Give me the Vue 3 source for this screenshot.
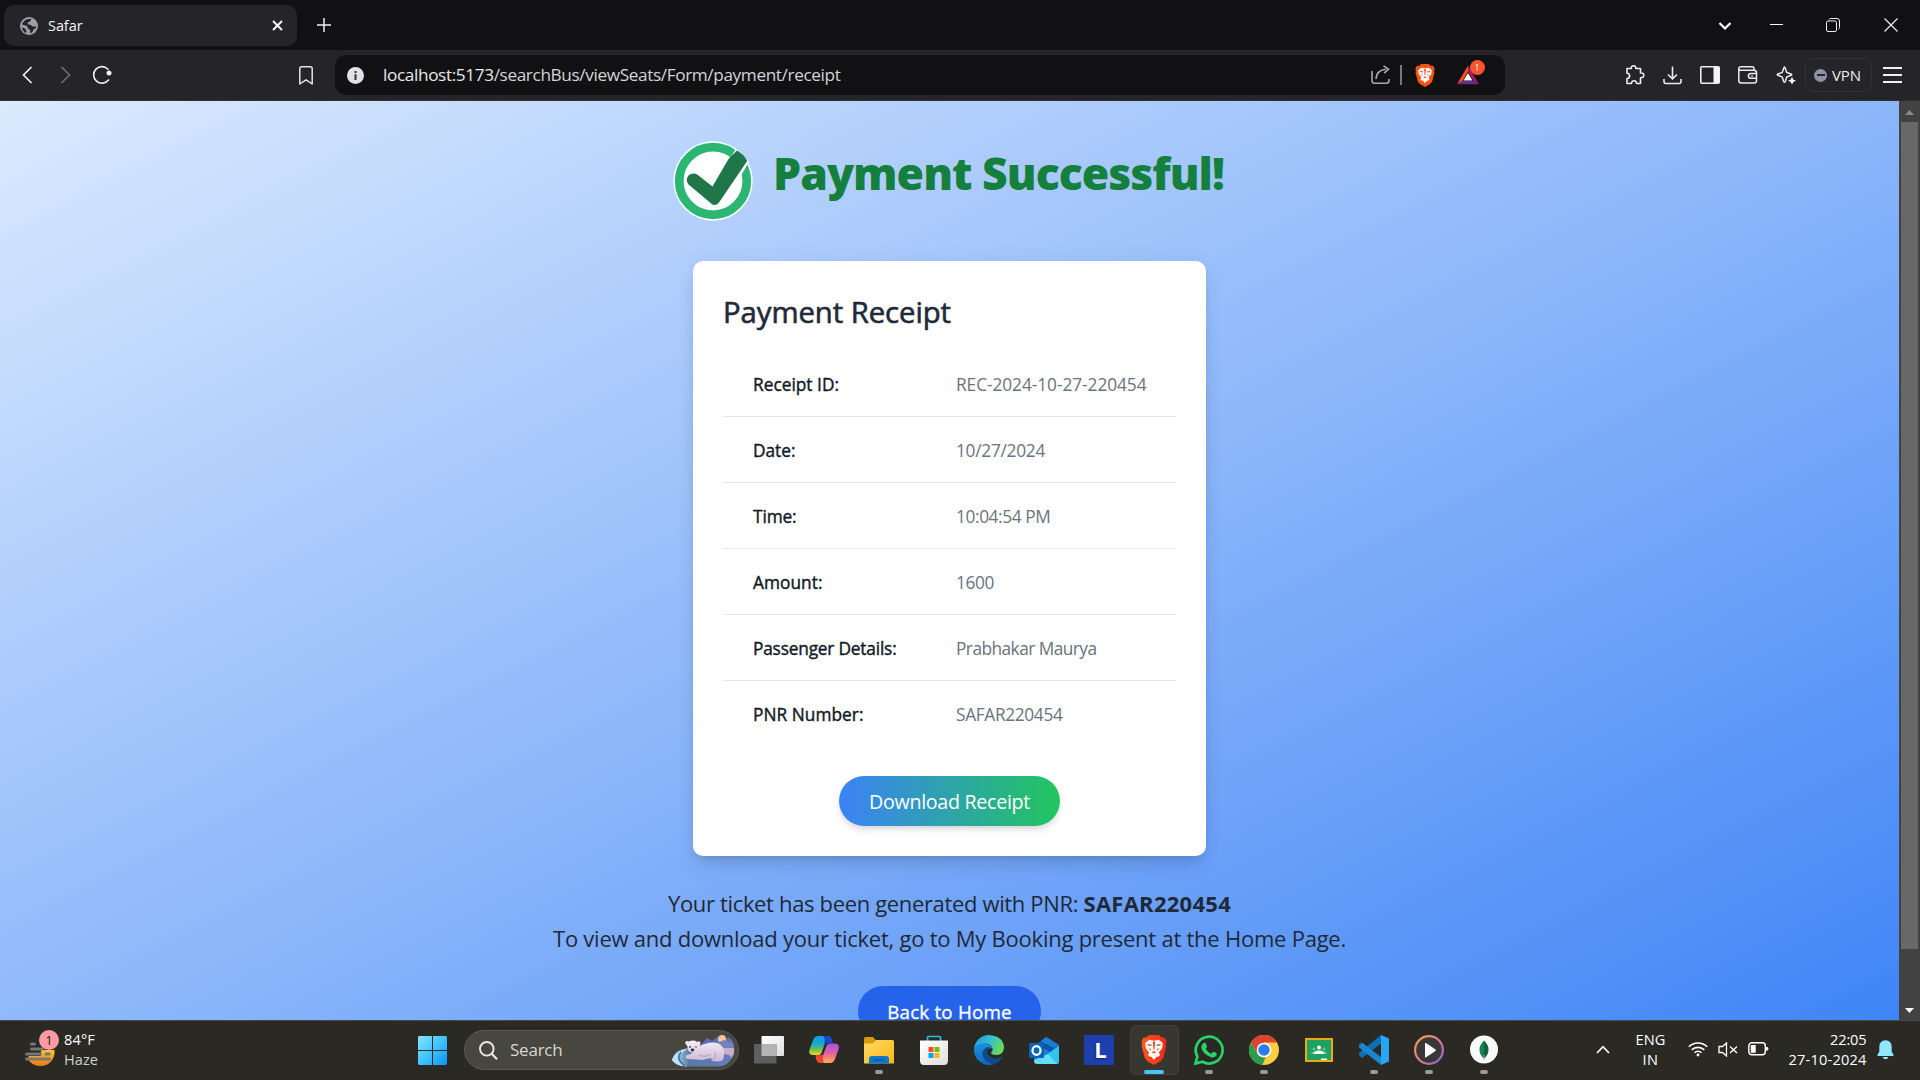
<script setup>
// Fits a label to a fixed advance width by spreading the difference over its letters.
const vFit = {
  mounted(el, { value }) {
    const apply = () => {
      el.style.letterSpacing = '0px'
      const natural = el.getBoundingClientRect().width
      el.style.letterSpacing = (value - natural) / el.textContent.length + 'px'
    }
    apply()
    if (document.fonts && document.fonts.ready) document.fonts.ready.then(apply)
  }
}

const rows = [
  { label: 'Receipt ID:', lw: 86, value: 'REC-2024-10-27-220454', vw: 190.5 },
  { label: 'Date:', lw: 42.5, value: '10/27/2024', vw: 89 },
  { label: 'Time:', lw: 43.5, value: '10:04:54 PM', vw: 94.5 },
  { label: 'Amount:', lw: 69.5, value: '1600', vw: 38 },
  { label: 'Passenger Details:', lw: 143.5, value: 'Prabhakar Maurya', vw: 140.5 },
  { label: 'PNR Number:', lw: 110.5, value: 'SAFAR220454', vw: 106.5 }
]
</script>

<template>
  <div class="screen">
    <svg width="0" height="0" class="defs">
      <defs>
        <linearGradient id="braveG" x1="0" y1="0" x2="1" y2="0"><stop offset="0" stop-color="#ff5a1c" /><stop offset="1" stop-color="#f8231a" /></linearGradient>
        <linearGradient id="winG" x1="0" y1="0" x2="1" y2="1"><stop offset="0" stop-color="#8be3ff" /><stop offset=".45" stop-color="#45c8fb" /><stop offset="1" stop-color="#0a93fb" /></linearGradient>
        <symbol id="lion" viewBox="0 0 26 30">
          <path d="M8 0h10l2.600 2.600 2.800-.2L25.600 6l-.8 3 .6 2-3.200 12-3 3.400L13 30l-6.200-3.600-3-3.400L.6 11l.6-2-.8-3 2.200-3.600 2.800.2z" />
          <path d="M8.200 4.800 13 5.700l4.800-.9 4 3.200-.6 5.200-3.400 4.200 1.200 2.600-1.500 1.600-2 .2L13 25l-2.500-3.200-2-.2L7 20l1.200-2.600-3.400-4.200L4.200 8z" fill="#fff" />
          <path d="M6.500 9l4.300.7-.8 1.400-3.400-.6zM19.500 9l-4.300.7.8 1.400 3.400-.6zM11.900 6.500h2.200L13.500 14.500h-1zM10.500 17l2.500-.7 2.500.7-2.500 1.600zM8 13l2 1.300-.8 1.700zM18 13l-2 1.300.8 1.700z" fill="#f4401c" />
        </symbol>
      </defs>
    </svg>

    <header class="tabs">
      <div class="tab">
        <svg class="globe" width="18" height="18" viewBox="0 0 18 18"><circle cx="9" cy="9" r="9" fill="#9aa0a6" /><path d="M8 1.900 11.500 2 10 4.500 7.800 5.200v2l2.700.5 2.200 1.800h3.500L16 11l-2.500 1.500-1.200 2.800-2.300 1 .2-3L7.600 11l-.5-2L2 7.600 2.800 5.500 5.300 3z" fill="#252429" /><path d="M2 10.200 5 11.500l1.500 2.200-.3 2.400C3.800 15 2.100 12.800 2 10.200z" fill="#252429" /></svg>
        <span class="tab-title"><span v-fit="34.5" class="t">Safar</span></span>
        <svg class="tab-x" width="11" height="11" viewBox="0 0 11 11"><path d="M1 1l9 9M10 1l-9 9" stroke="#fff" stroke-width="1.900" /></svg>
      </div>
      <svg class="plus" width="14" height="14" viewBox="0 0 14 14"><path d="M7 0v14M0 7h14" stroke="#eee" stroke-width="1.500" /></svg>
      <div class="win">
        <svg width="14" height="10" viewBox="0 0 14 10"><path d="M1.500 2l5.500 5.500L12.500 2" fill="none" stroke="#fff" stroke-width="2.200" /></svg>
        <svg width="14" height="14" viewBox="0 0 14 14"><path d="M0 6.500h13" stroke="#fff" /></svg>
        <svg width="14" height="14" viewBox="0 0 14 14" fill="none" stroke="#eee"><rect x=".5" y="3" width="10" height="10.500" rx="1.500" /><path d="M3 1.500Q3.300.5 4.500.5H11a2.500 2.500 0 0 1 2.500 2.500v6.500q0 1.200-1 1.500" /></svg>
        <svg width="14" height="14" viewBox="0 0 14 14"><path d="M.5.5l13 13M13.500.5l-13 13" stroke="#eee" stroke-width="1.200" /></svg>
      </div>
    </header>

    <nav class="toolbar">
      <svg class="back" width="11" height="18" viewBox="0 0 11 18"><path d="M9.500 1 1.500 9l8 8" fill="none" stroke="#f1f1f3" stroke-width="1.700" /></svg>
      <svg class="fwd" width="11" height="18" viewBox="0 0 11 18"><path d="M1.500 1l8 8-8 8" fill="none" stroke="#6d6d73" stroke-width="1.700" /></svg>
      <svg class="reload" width="20" height="20" viewBox="0 0 20 20"><path d="M16.500 15A8.300 8.300 0 1 1 16 4.200" fill="none" stroke="#f1f1f3" stroke-width="1.600" stroke-linecap="round" /><circle cx="17" cy="8" r="2.500" fill="#f1f1f3" /></svg>
      <svg class="mark" width="14" height="19" viewBox="0 0 14 19"><path d="M.8 2.800Q.8.800 2.800.8h8.400q2 0 2 2V18L7 13.800.8 18z" fill="none" stroke="#e4e4e8" stroke-width="1.500" stroke-linejoin="round" /></svg>
      <div class="url">
        <svg width="17" height="17" viewBox="0 0 17 17"><circle cx="8.500" cy="8.500" r="8.500" fill="#e3e1e8" /><path d="M7.500 7.200h2v5.800h-2zM7.500 4h2v2h-2z" fill="#333" /></svg>
        <span class="address"><span v-fit="457.500" class="t">localhost:5173<span class="dim">/searchBus/viewSeats/Form/payment/receipt</span></span></span>
        <svg class="share" width="20" height="20" viewBox="0 0 20 20" fill="none" stroke="#a8a8ad" stroke-width="1.600"><path d="M1 6v9.500Q1 18.200 3.700 18.200h11.600q2.700 0 2.700-2.700V14M5 14Q5.500 5 15 4.200M12.500.8 17.500 4.200 13.200 8.200" /></svg>
        <i class="sep"></i>
        <svg class="lion-s" width="20" height="23" fill="#ff5410"><use href="#lion" /></svg>
        <div class="bat">
          <svg width="22" height="20" viewBox="0 0 24 21"><path d="M12 0 0 20.500 6.200 17 12 7z" fill="#ff4724" /><path d="M12 0v7l5.800 10 6.200 3.500z" fill="#9e1f63" /><path d="M0 20.500h24L17.800 17H6.200z" fill="#662d91" /><path d="M12 8.200 16.800 16.400H7.200z" fill="#fff" /></svg>
          <b>1</b>
        </div>
      </div>
      <div class="tools">
        <svg width="20" height="20" viewBox="0 0 20 20"><path d="M2 3.500h4.300Q6 .8 8.500.8T10.800 3.500H15.500V8Q18.800 7.700 18.800 10.300T15.500 12.800V18.500H11.600Q11.500 15.700 9 15.700T6.500 18.500H2V13.500Q4.600 13.300 4.600 10.900T2 8.300z" fill="none" stroke="#ececf0" stroke-width="1.600" stroke-linejoin="round" /></svg>
        <svg width="19" height="19" viewBox="0 0 19 19"><path d="M9.500.5v12M5 8.500l4.500 4.300L14 8.500M1 13v2.500q0 2 2 2h13q2 0 2-2V13" fill="none" stroke="#ececf0" stroke-width="1.600" /></svg>
        <svg width="20" height="18" viewBox="0 0 20 18"><rect x=".8" y=".8" width="18.400" height="16.400" rx="1" fill="none" stroke="#ececf0" stroke-width="1.600" /><path d="M13.500 1h6v16h-6z" fill="#f4f4f6" /></svg>
        <svg width="20" height="18" viewBox="0 0 20 18" fill="none" stroke="#ececf0" stroke-width="1.500"><path d="M16 4V2.500Q16 .8 14.300.8H3Q.8.8.8 2.700V14.500Q.8 17 3.200 17H16q2.500 0 2.500-2.300V6.500Q18.500 4.200 16 4.200H3Q1 4.200.9 3" /><path d="M19 7.500h-6q-2.600 0-2.600 2.400t2.600 2.400h6M13.300 9.900h1.500" /></svg>
        <svg width="20" height="19" viewBox="0 0 20 19"><path d="M8.500 1Q9 1 9.300 2.300L10.700 6.500 15 8q1.500.600 0 1.300L10.700 11 9.300 15.500q-.8 1.600-1.600 0L6.200 11 2 9.300Q.500 8.600 2 8L6.200 6.500 7.700 2.300Q8 1 8.500 1z" fill="none" stroke="#ececf0" stroke-width="1.500" /><path d="M16 10.800l1.200 2.800 2.800 1.200-2.800 1.200L16 18.800 14.800 16 12 14.800l2.800-1.200z" fill="#fff" /></svg>
      </div>
      <div class="vpn"><i></i><span v-fit="29" class="t">VPN</span></div>
      <div class="burger"><i></i><i></i><i></i></div>
    </nav>

    <div class="viewport">
      <main class="page">
        <div class="title">
          <svg width="80" height="80" viewBox="0 0 80 80"><circle cx="40" cy="40" r="39.700" fill="#fff" /><circle cx="40" cy="40" r="33.800" fill="none" stroke="#2cb673" stroke-width="8.800" /><path d="M63 8 76 21 67 36 54 22z" fill="#fff" /><path d="M55.500 18 64 9.600Q70.500 13 74.200 20L46 61.500Q41.500 66.500 37 61.500L15.500 43.500Q12 39 15.500 34.500 20 31 24.500 33.800L39.500 45.500z" fill="#1f7648" /></svg>
          <h1><span v-fit="451" class="t">Payment Successful!</span></h1>
        </div>
        <section class="card">
          <h2><span v-fit="228" class="t">Payment Receipt</span></h2>
          <dl>
            <div v-for="r in rows" :key="r.label" class="row">
              <dt><span v-fit="r.lw" class="t">{{ r.label }}</span></dt>
              <dd><span v-fit="r.vw" class="t">{{ r.value }}</span></dd>
            </div>
          </dl>
          <button class="download"><span v-fit="161" class="t">Download Receipt</span></button>
        </section>
        <p><span v-fit="415.500" class="t pre">Your ticket has been generated with PNR: </span><b><span v-fit="147.500" class="t">SAFAR220454</span></b></p>
        <p><span v-fit="793" class="t">To view and download your ticket, go to My Booking present at the Home Page.</span></p>
        <button class="home"><span v-fit="124.500" class="t">Back to Home</span></button>
      </main>
      <aside class="scroll">
        <svg width="9" height="5" viewBox="0 0 9 5"><path d="M0 5 4.500 0 9 5z" fill="#8a8a8a" /></svg>
        <i></i>
        <svg width="9" height="5" viewBox="0 0 9 5"><path d="M0 0 4.500 5 9 0z" fill="#fff" /></svg>
      </aside>
    </div>

    <footer class="taskbar">
      <div class="weather">
        <svg width="36" height="38" viewBox="0 0 36 38">
          <defs><linearGradient id="sun" x1="0" y1="0" x2="0" y2="1"><stop offset="0" stop-color="#f8c130" /><stop offset="1" stop-color="#f07a18" /></linearGradient></defs>
          <path d="M16 20h13.500A14 14 0 0 1 15 36Q7 35.500 3.500 30V26h12z" fill="url(#sun)" />
          <path d="M6.500 14h3M6.500 19h11M1.500 24h14M21 24h3M1.500 29h23" stroke="#77777a" stroke-width="3" stroke-linecap="round" />
          <circle cx="24" cy="10" r="10" fill="#ff99a4" />
          <text x="24" y="15" text-anchor="middle" font-size="13" font-family="Open Sans, sans-serif" fill="#222">1</text>
        </svg>
        <div class="wtext"><span><span v-fit="31" class="t">84°F</span></span><span class="soft"><span v-fit="34" class="t">Haze</span></span></div>
      </div>

      <svg class="start" width="29" height="29" viewBox="0 0 29 29"><path d="M1 0h13v14H0V1zM15 0h13l1 1v13H15zM0 15h14v14H1l-1-1zM15 15h14v13l-1 1H15z" fill="url(#winG)" /></svg>

      <div class="search">
        <svg width="19" height="19" viewBox="0 0 19 19"><circle cx="7.800" cy="7.800" r="6.800" fill="none" stroke="#e8e8e6" stroke-width="1.900" /><path d="M12.500 12.500l5.500 5.700" stroke="#e8e8e6" stroke-width="2.200" /></svg>
        <span class="stext"><span v-fit="52.500" class="t">Search</span></span>
        <svg class="bear" width="64" height="32" viewBox="0 0 64 32">
          <defs><linearGradient id="ice" x1="0" y1="0" x2="1" y2="0"><stop offset="0" stop-color="#b5e4fa" /><stop offset=".3" stop-color="#587ba6" /><stop offset="1" stop-color="#657bbb" /></linearGradient><linearGradient id="fur" x1="0" y1="0" x2="0" y2="1"><stop offset="0" stop-color="#f5edf6" /><stop offset="1" stop-color="#cdb7d5" /></linearGradient></defs>
          <path d="M28 12 36 3l5 3 5-4 7 4 4-4 4 3q3 6 2 14H30z" fill="#5e70b3" />
          <circle cx="51" cy="4" r="4" fill="#f4c29c" /><path d="M45 8.500 53 5l9 3 1 6H44z" fill="#7282bf" />
          <path d="M50 13h13q1 7-4 12l-10 1z" fill="#c9adc6" />
          <path d="M1 25Q4 14 18 13L58 20Q62 22 58 27 54 31.500 46 31.500H16Q5 31 1 25z" fill="url(#ice)" />
          <path d="M1 25Q5 15 17 13.500 7 20 8 24t8 7.500Q5 31 1 25z" fill="#b9e3fa" /><path d="M10 17Q4 24 14 31" fill="none" stroke="#3d6595" stroke-width="1.500" />
          <path d="M14 8q1-3 4-1.500 5-2 8 .500 3-2 3.500 1 0 2-1 3 10-5 18-3Q54 11 53 20q0 6-5 6.500l-7-.500-1-3-9 2-14-1Q13 23 16 20q4-1 6-2.500-6 0-5.500-6z" fill="url(#fur)" />
          <path d="M28 20q6 3 12-1M44 17q2 6-3 8" fill="none" stroke="#b195ba" stroke-width=".8" />
          <circle cx="19" cy="12" r=".9" fill="#444" /><circle cx="25" cy="12" r=".8" fill="#444" /><ellipse cx="21.500" cy="15" rx="1.800" ry="1.400" fill="#3c343d" />
        </svg>
      </div>

      <div class="apps">
        <div class="app"><svg width="30" height="30" viewBox="0 0 30 30"><defs><linearGradient id="tv" x1="0" y1="0" x2="1" y2="1"><stop offset="0" stop-color="#fff" /><stop offset="1" stop-color="#dedede" /></linearGradient></defs><rect x="7.500" y="1" width="22.500" height="20" rx="1" fill="url(#tv)" /><rect x="0" y="9" width="22.500" height="19.500" rx="1" fill="#5f5f5f" /><path d="M7.500 9h15v12h-15z" fill="#b4b4b4" /></svg></div>

        <div class="app"><svg width="30" height="30" viewBox="0 0 30 30">
          <defs>
            <linearGradient id="cpA" x1="0" y1="0" x2="0" y2="1"><stop offset="0" stop-color="#1c95ee" /><stop offset=".4" stop-color="#15a8c8" /><stop offset=".7" stop-color="#69bd57" /><stop offset="1" stop-color="#f4d621" /></linearGradient>
            <linearGradient id="cpB" x1="0" y1="0" x2="0" y2="1"><stop offset="0" stop-color="#a355e8" /><stop offset=".5" stop-color="#e5609c" /><stop offset="1" stop-color="#ffae4b" /></linearGradient>
          </defs>
          <path d="M9 1h10q2.500 0 3.300 2.800L23.500 8H18q-2 0-2.700 2L12.500 18q-.8 2-3 2H4q-5 0-3.500-5.500L4 5Q5.500 1 9 1z" fill="url(#cpA)" />
          <path d="M14 1h5q2.500 0 3.300 2.800L23.500 8H18q-2.500 0-3.500 3Q17 4 14 1z" fill="#1947cf" />
          <path d="M21 28H11q-2.500 0-3.300-2.800L6.500 20.500H12q2 0 2.700-2L17.500 11q.8-2.500 3-2.500H26q5 0 3.500 6L26 24q-1.500 4-5 4z" fill="url(#cpB)" />
          <path d="M6.500 20.500H12q2 0 2.700-2Q13 25 15 28h-4q-2.500 0-3.300-2.800z" fill="#e9472f" />
        </svg></div>

        <div class="app"><svg width="30" height="30" viewBox="0 0 30 30"><defs><linearGradient id="fo" x1="0" y1="0" x2="1" y2="1"><stop offset="0" stop-color="#ffd968" /><stop offset="1" stop-color="#f9b916" /></linearGradient></defs><path d="M0 3.500Q0 2 1.500 2H9l3 3.500L9 9H0z" fill="#d89a0c" /><path d="M0 8.500h8.500L12 5h16.500Q30 5 30 6.500v22H0z" fill="url(#fo)" /><path d="M5 28.500V24q0-3 3-3h14q3 0 3 3v4.500z" fill="#0f77cc" /><path d="M10 25h10" stroke="#0a4c91" stroke-width="1.200" /></svg><i class="dot"></i></div>

        <div class="app"><svg width="30" height="30" viewBox="0 0 30 30"><path d="M8.500 6V2.500q0-1 1-1h11q1 0 1 1V6" fill="none" stroke="#2db9ee" stroke-width="1.700" /><path d="M1 5.500h28v20Q29 30 25 30H5q-4 0-4-4.500z" fill="url(#tv)" /><path d="M9.500 12h5v5h-5z" fill="#f25022" /><path d="M15.500 12h5v5h-5z" fill="#7fba00" /><path d="M9.500 18h5v5h-5z" fill="#00a4ef" /><path d="M15.500 18h5v5h-5z" fill="#ffb900" /></svg></div>

        <div class="app"><svg width="30" height="30" viewBox="0 0 30 30">
          <defs><linearGradient id="edA" x1="0" y1=".3" x2="1" y2=".6"><stop offset="0" stop-color="#1d9be4" /><stop offset=".5" stop-color="#35c1cf" /><stop offset="1" stop-color="#6fdd4a" /></linearGradient><linearGradient id="edB" x1="0" y1="0" x2="0" y2="1"><stop offset="0" stop-color="#1a92df" /><stop offset="1" stop-color="#0d67bd" /></linearGradient></defs>
          <path d="M0 14A15 15 0 0 1 15 0Q29.500 1 30 12.500q-.500 7.500-7.500 7.500-5 0-5.500-2.200 2-1.800 1.500-4.300Q17.500 8.500 11 8.500 3 9 0 14z" fill="url(#edA)" />
          <path d="M0 14Q3 8.500 10.500 8.500q7 .5 8 5-5-2-8 2.500-2 7 4 11 3 2.500 7 1.500Q18 30 15 30A15 15 0 0 1 0 14z" fill="url(#edB)" />
          <path d="M12 12.500Q7 16 9 21.500 12 29 20.500 29 26 27 28.300 22.500q0-1-1-.5-6.300 3-11.300-.5-4-3-2.500-6.500.8-1.500 4-1.500-2.500-2.500-5.500-1z" fill="#114a8b" />
        </svg></div>

        <div class="app"><svg width="30" height="30" viewBox="0 0 30 30"><path d="M5 12 17 2 30 10v16.500Q30 29 27.500 29H8q-3 0-3-3z" fill="#1683d8" /><path d="M7 9 17 2 30 10 21 17z" fill="#0a54a8" /><path d="M12 6.500 25 13l5-3-13-8z" fill="#1a7ed0" /><path d="M30 11v15.500Q30 29 27.500 29H10L20 18z" fill="#32c4f1" /><path d="M5 25l14-6 9 9.700q-1 .3-2 .3H8q-3 0-3-4z" fill="#67dcf8" /><rect x="0" y="8" width="15" height="15" rx="1.500" fill="#0b63b8" /><ellipse cx="7.500" cy="15.500" rx="4" ry="4.300" fill="none" stroke="#fff" stroke-width="2.200" /></svg></div>

        <div class="app"><span class="ltile">L</span></div>

        <div class="app active"><svg width="26" height="30" fill="url(#braveG)"><use href="#lion" /></svg><i class="dot on"></i></div>

        <div class="app"><svg width="30" height="30" viewBox="0 0 30 30"><path d="M1.500 28.500 3.400 21.500A13.400 13.400 0 1 1 8.300 26.600z" fill="none" stroke="#25d366" stroke-width="2.700" /><path d="M9.300 8.300q1.200-1.300 2.300-.2l1.500 3.300q0 .9-1.400 2.400 1.800 3.400 5.500 5 1-.9 1.700-1.900.7-.5 3.500 1.200 1.200.9-.3 3-2.500 2.200-5.800.8-6-2-8.700-7.800-1-3.500 1.700-5.800z" fill="#25d366" /></svg><i class="dot"></i></div>

        <div class="app"><svg width="30" height="30" viewBox="0 0 30 30"><circle cx="15" cy="15" r="15" fill="#ffcd40" /><path d="M2 7.500A15 15 0 0 1 28 7.500H15L8.500 18.700z" fill="#df4233" /><path d="M2 7.500 8.500 18.700Q11 22.500 15 22.500h1.500L13.500 30A15 15 0 0 1 2 7.500z" fill="#2b9c4e" /><path d="M21.500 18.700 15 30q-.8 0-1.500-.1L17.500 22z" fill="#ffcd40" /><circle cx="15" cy="15" r="7.300" fill="#fff" /><circle cx="15" cy="15" r="5.800" fill="#2d7cee" /></svg><i class="dot"></i></div>

        <div class="app"><svg width="28" height="30" viewBox="0 0 28 30"><rect x="1" y="4" width="26" height="22" fill="#1da261" stroke="#e8ab14" stroke-width="2" /><circle cx="14" cy="12.500" r="2" fill="#fff" /><path d="M8.500 19q0-3.500 5.500-3.500t5.500 3.500z" fill="#fff" /><circle cx="9" cy="14" r="1.300" fill="#74c79a" /><circle cx="19" cy="14" r="1.300" fill="#74c79a" /><path d="M6 19q0-2 3-2.500v2.500zM22 19q0-2-3-2.500v2.500z" fill="#74c79a" /><path d="M16 23.500h6v1.500h-6z" fill="#fff" /></svg></div>

        <div class="app"><svg width="30" height="30" viewBox="0 0 30 30"><path d="M22 0v8.500L3 23 0 20v-2z" fill="#0f6fb5" /><path d="M0 10l3-2.500L22 22v8L0 12.500z" fill="#1a86cf" /><path d="M22 0l8 3.500v23L22 30z" fill="#27a4f2" /></svg><i class="dot"></i></div>

        <div class="app"><svg width="30" height="30" viewBox="0 0 30 30"><defs><linearGradient id="mp" x1="0" y1="0" x2="1" y2="1"><stop offset="0" stop-color="#ffa03c" /><stop offset=".5" stop-color="#d97a8e" /><stop offset="1" stop-color="#8b62d6" /></linearGradient></defs><circle cx="15" cy="15" r="13.900" fill="#383838" stroke="url(#mp)" stroke-width="2.200" /><path d="M11 8.500v13.500q0 .8 1 .3L21.500 16q.8-.8 0-1.500L12 8q-1-.4-1 .5z" fill="#fff" /></svg><i class="dot"></i></div>

        <div class="app"><svg width="28" height="30" viewBox="0 0 28 30"><circle cx="14" cy="14.500" r="14" fill="#f9f9f9" /><path d="M14 5.500q5 5 4.500 10-.5 5-4.500 8z" fill="#14603f" /><path d="M14 5.500q-5 5-4.500 10 .5 5 4.500 8z" fill="#13835a" /><path d="M14 20v5" stroke="#9bb8a8" /></svg><i class="dot"></i></div>
      </div>

      <div class="tray">
        <svg class="chev" width="14" height="9" viewBox="0 0 14 9"><path d="M1 8l6-6.300L13 8" fill="none" stroke="#fff" stroke-width="1.700" /></svg>
        <div class="lang"><span><span v-fit="30" class="t">ENG</span></span><span><span v-fit="16" class="t">IN</span></span></div>
        <svg class="wifi" width="20" height="16" viewBox="0 0 20 16" fill="none" stroke="#fff" stroke-width="1.600"><path d="M.8 5.800a13 13 0 0 1 18.400 0M3.700 8.900a9 9 0 0 1 12.600 0M6.500 11.800a5 5 0 0 1 7 0" /><circle cx="10" cy="14" r="1.400" fill="#fff" stroke="none" /></svg>
        <svg class="vol" width="20" height="15" viewBox="0 0 20 15" fill="none" stroke="#fff" stroke-width="1.300"><path d="M8.500 1v13L4.500 10.500H1v-6h3.500zM12 4.500l7 6.500M19 4.500 12 11" /></svg>
        <svg class="batt" width="21" height="14" viewBox="0 0 21 14"><rect x=".8" y=".8" width="16.500" height="12" rx="3" fill="none" stroke="#fff" stroke-width="1.400" /><path d="M2.700 3h5v7.700h-5zM18 4.800q2.500 0 2.500 2t-2.500 2z" fill="#fff" /></svg>
        <div class="clock"><span><span v-fit="36.500" class="t">22:05</span></span><span><span v-fit="78" class="t">27-10-2024</span></span></div>
        <svg class="bell" width="17" height="20" viewBox="0 0 17 20"><path d="M8.500.3q6.200.5 6.200 6.500v5l1.900 3q.2 1.200-.8 1.200H1.200Q.2 16 .4 14.800l1.900-3v-5q0-6 6.200-6.500z" fill="#8fe6ff" /><path d="M5.500 17h6q-1 2.300-3 2.300t-3-2.300z" fill="#8fe6ff" /></svg>
      </div>
    </footer>
  </div>
</template>

<style>
html, body { margin: 0; overflow: hidden; background: #111113; }
</style>

<style scoped>
.screen { width: 1920px; height: 1080px; display: flex; flex-direction: column; overflow: hidden; font-family: "Open Sans", "Noto Sans", sans-serif; position: relative; }
.screen * { box-sizing: border-box; }
.defs { position: absolute; }
svg { display: block; flex: none; }
.t { display: inline-block; white-space: nowrap; }
.t.pre { white-space: pre; }

.tabs { height: 50px; flex: none; background: #111113; display: flex; align-items: center; padding-left: 4px; }
.tab { width: 293px; height: 41px; margin-top: 1px; background: #252429; border-radius: 10px; display: flex; align-items: center; padding-left: 16px; }
.tab-title { font-size: 14.500px; color: #f4f4f6; margin-left: 10px; width: 224px; line-height: 20px; }
.plus { margin-left: 20px; }
.win { margin-left: auto; display: flex; align-items: center; margin-right: 22px; }
.win svg:nth-child(1) { margin-top: 2px; }
.win svg:nth-child(2) { margin-left: 38px; margin-right: 42px; margin-top: -1px; }
.win svg:nth-child(4) { margin-left: 44px; }

.toolbar { height: 51px; flex: none; background: #252429; border-bottom: 1px solid #303035; display: flex; align-items: center; }
.back { margin-left: 22px; }
.fwd { margin-left: 27px; }
.reload { margin-left: 21px; margin-top: -1px; }
.mark { margin-left: 187px; }
.url { width: 1170px; height: 40px; margin-left: 22px; border-radius: 11px; background: #111113; display: flex; align-items: center; padding-left: 12px; }
.address { margin-left: 19px; font-size: 17.200px; color: #e8e8ec; line-height: 24px; width: 988px; margin-top: -1px; }
.dim { color: #d4d4d8; }
.sep { width: 1.500px; height: 20px; background: #77777c; margin: 0 13px 0 9px; }
.bat { margin-left: 22px; position: relative; }
.bat b { position: absolute; left: 13px; top: -5px; width: 15px; height: 15px; border-radius: 50%; background: #ff5331; color: #fff; font-size: 9px; line-height: 15px; text-align: center; font-weight: 400; }
.tools { display: flex; align-items: center; gap: 18px; margin-left: 120px; }
.vpn { margin-left: 9px; width: 67px; height: 34px; border: 1px solid #333238; border-radius: 9px; display: flex; align-items: center; font-size: 15px; color: #ececf0; padding-left: 8px; }
.vpn i { width: 13px; height: 13px; border-radius: 50%; background: linear-gradient(#252429, #252429) center / 8px 2px no-repeat #9090a6; margin-right: 5px; }
.burger { margin-left: 11px; display: flex; flex-direction: column; gap: 5px; width: 19px; }
.burger i { height: 1.700px; background: #f1f1f3; }

.viewport { height: 919px; flex: none; display: flex; overflow: hidden; }
.page { width: 1899px; height: 975px; flex: none; background: linear-gradient(to bottom right, #dbeafe, #3b82f6); display: flex; flex-direction: column; align-items: center; padding-top: 40px; }
.title { display: flex; height: 80px; gap: 20px; margin: 0 2px 40px 0; flex: none; }
h1 { margin: 0; font-size: 44.500px; line-height: 50px; font-weight: 800; color: #15803d; padding-top: 7px; }
.card { width: 513px; height: 595px; flex: none; background: #fff; border-radius: 10px; box-shadow: 0 12px 19px -4px rgba(0, 0, 0, .12), 0 5px 8px -5px rgba(0, 0, 0, .1), 0 0 20px rgba(0, 0, 0, .05); padding: 30px; display: flex; flex-direction: column; align-items: center; margin-bottom: 30px; }
h2 { margin: 0 0 20px; padding-top: 1px; font-size: 29.300px; line-height: 40px; height: 40px; font-weight: 500; -webkit-text-stroke: .6px #1f2937; color: #1f2937; align-self: stretch; }
dl { margin: 0 0 30px; align-self: stretch; }
.row { height: 66px; border-bottom: 1px solid #e5e7eb; display: flex; align-items: center; padding: 2px 0 0 30px; font-size: 17.300px; line-height: 24px; }
.row:last-child { height: 65px; border: 0; }
dt { width: 203px; font-weight: 500; -webkit-text-stroke: .4px #111827; color: #111827; margin: 0; }
dd { margin: 0; color: #6b7280; font-weight: 400; }
button { border: 0; font-family: inherit; color: #fff; height: 50px; flex: none; border-radius: 25px; padding: 1px 0 0; font-size: 19.700px; line-height: 28px; }
.download { width: 221px; background: linear-gradient(to right, #3b82f6, #22c55e); box-shadow: 0 5px 8px -1px rgba(0, 0, 0, .1), 0 3px 5px -2px rgba(0, 0, 0, .1); }
p { margin: 0; font-size: 22px; line-height: 35px; height: 35px; color: #1f2937; white-space: nowrap; flex: none; }
p b { font-weight: 700; }
.home { width: 183px; margin-top: 30px; background: #2563eb; font-weight: 500; -webkit-text-stroke: .3px #fff; font-size: 18.800px; }
.scroll { width: 21px; height: 919px; flex: none; background: #424242; display: flex; flex-direction: column; align-items: center; padding: 9px 0 7px; }
.scroll i { width: 17px; height: 827px; margin-top: 7px; background: #686868; }
.scroll svg:last-child { margin-top: auto; }

.taskbar { height: 60px; flex: none; background: #2a2923; border-top: 1px solid #4c4b45; display: flex; align-items: center; color: #fff; font-size: 14.600px; line-height: 20px; padding-bottom: 1px; }
.weather { display: flex; width: 393px; margin-left: 25px; }
.weather svg { margin-top: -2px; }
.wtext { display: flex; flex-direction: column; margin-left: 3px; margin-top: -3px; }
.soft { color: #cfcfcb; }
.start { margin: 0 17px 0 0; }
.search { width: 275px; height: 40px; border-radius: 20px; background: #48473f; border: 1px solid #5a5953; display: flex; align-items: center; padding-left: 14px; }
.stext { margin-left: 12px; width: 161px; font-size: 17px; color: #d6d6d2; }
.bear { margin-top: 1px; }
.apps { display: flex; margin-left: 2.500px; }
.app { width: 55px; height: 50px; display: flex; align-items: center; justify-content: center; position: relative; }
.app > svg, .ltile { margin-top: -1px; }
.app.active { background: #37362f; border-radius: 6px; width: 49px; margin: 0 3px; box-shadow: inset 0 0 0 1px #403f39; }
.dot { position: absolute; bottom: 1px; left: calc(50% - 4px); width: 8px; height: 4px; border-radius: 2px; background: #9b9b98; }
.dot.on { width: 20px; left: calc(50% - 10px); background: #4cc2ff; }
.ltile { width: 30px; height: 30px; background: #1e40af; color: #fff; font-weight: 700; font-size: 22px; line-height: 29px; text-align: center; text-shadow: -1px 1px 1px #112a50; padding-left: 3px; }
.tray { display: flex; align-items: center; margin-left: 84px; margin-top: -2px; }
.lang { display: flex; flex-direction: column; align-items: center; margin-left: 26px; width: 30px; }
.wifi { margin-left: 22px; }
.vol { margin-left: 10px; }
.batt { margin-left: 10px; }
.clock { display: flex; flex-direction: column; align-items: flex-end; margin-left: 19px; width: 79px; }
.bell { margin-left: 10px; margin-top: 1px; }
</style>
